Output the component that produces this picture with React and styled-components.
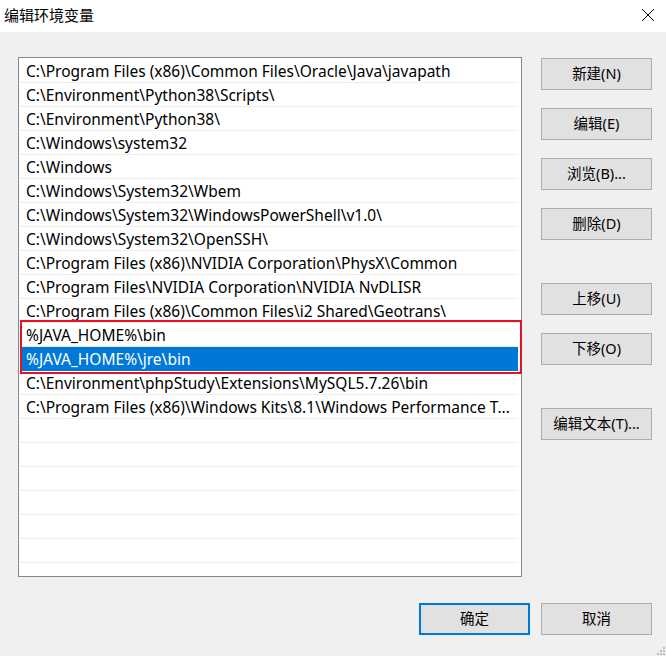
import React from "react";
import styled, { createGlobalStyle } from "styled-components";

const Global = createGlobalStyle`
  html, body {
    margin: 0;
    padding: 0;
    background: #f0f0f0;
  }
  body {
    font-family: "Microsoft YaHei UI", "Noto Sans", "Noto Sans CJK SC", sans-serif;
  }
`;

const Window = styled.div`
  width: 666px;
  height: 656px;
  background: #f0f0f0;
  position: relative;
  overflow: hidden;
`;

const TitleBar = styled.div`
  height: 32px;
  background: #ffffff;
  display: flex;
  align-items: center;
  justify-content: space-between;
  padding: 0 10px 0 4px;
  box-sizing: border-box;
`;

const Title = styled.div`
  font-family: "Noto Sans CJK SC", sans-serif;
  font-size: 15px;
  color: #000;
  margin-top: -4px;
`;

const Close = styled.div`
  width: 16px;
  height: 16px;
  margin-top: -4px;
`;

const Body = styled.div`
  display: flex;
  padding: 25px 14px 0 18px;
`;

const List = styled.div`
  width: 504px;
  height: 520px;
  box-sizing: border-box;
  border: 1px solid #828790;
  background: #fff;
  padding: 1px 0 0 1px;
  position: relative;
`;

const Row = styled.div`
  height: 24px;
  box-sizing: border-box;
  margin-right: 3px;
  border-bottom: 1px solid ${(p) => (p.$selected ? "#0078d7" : "#ededed")};
  background: ${(p) => (p.$selected ? "#0078d7" : "transparent")};
  color: ${(p) => (p.$selected ? "#fff" : "#000")};
  font-family: "Noto Sans", "Noto Sans CJK SC", sans-serif;
  font-size: 15.5px;
  line-height: 24px;
  padding-left: 6px;
  white-space: nowrap;
  overflow: hidden;
`;

const Highlight = styled.div`
  position: absolute;
  left: 1px;
  top: 262px;
  width: 502px;
  height: 54px;
  box-sizing: border-box;
  border: 2px solid #e81123;
  pointer-events: none;
`;

const Side = styled.div`
  display: flex;
  flex-direction: column;
  margin-left: 19px;
  padding-top: 1px;
`;

const Button = styled.div`
  width: 111px;
  height: 32px;
  box-sizing: border-box;
  border: ${(p) => (p.$default ? "2px solid #0078d7" : "1px solid #adadad")};
  background: #e1e1e1;
  display: flex;
  align-items: center;
  justify-content: center;
  padding-bottom: 3px;
  font-family: "Noto Sans", "Noto Sans CJK SC", sans-serif;
  font-size: 14.5px;
  color: #000;
  margin-top: ${(p) => p.$gap || 0}px;
`;

const Footer = styled.div`
  display: flex;
  justify-content: flex-end;
  gap: 11px;
  padding: 26px 14px 0 0;
`;

const Grip = styled.div`
  position: absolute;
  right: 1px;
  bottom: 1px;
  width: 10px;
  height: 10px;
  display: grid;
  grid-template-columns: repeat(3, 2px);
  grid-auto-rows: 2px;
  gap: 1px;
  justify-content: end;
  align-content: end;
`;

const Dot = styled.span`
  background: ${(p) => (p.$on ? "#bcbcbc" : "transparent")};
`;

const paths = [
  "C:\\Program Files (x86)\\Common Files\\Oracle\\Java\\javapath",
  "C:\\Environment\\Python38\\Scripts\\",
  "C:\\Environment\\Python38\\",
  "C:\\Windows\\system32",
  "C:\\Windows",
  "C:\\Windows\\System32\\Wbem",
  "C:\\Windows\\System32\\WindowsPowerShell\\v1.0\\",
  "C:\\Windows\\System32\\OpenSSH\\",
  "C:\\Program Files (x86)\\NVIDIA Corporation\\PhysX\\Common",
  "C:\\Program Files\\NVIDIA Corporation\\NVIDIA NvDLISR",
  "C:\\Program Files (x86)\\Common Files\\i2 Shared\\Geotrans\\",
  "%JAVA_HOME%\\bin",
  "%JAVA_HOME%\\jre\\bin",
  "C:\\Environment\\phpStudy\\Extensions\\MySQL5.7.26\\bin",
  "C:\\Program Files (x86)\\Windows Kits\\8.1\\Windows Performance T...",
  "",
  "",
  "",
  "",
  "",
  "",
];

const sideButtons = [
  { label: "新建(N)", gap: 0 },
  { label: "编辑(E)", gap: 18 },
  { label: "浏览(B)...", gap: 18 },
  { label: "删除(D)", gap: 18 },
  { label: "上移(U)", gap: 43 },
  { label: "下移(O)", gap: 18 },
  { label: "编辑文本(T)...", gap: 43 },
];

export default function App() {
  return (
    <Window>
      <Global />
      <TitleBar>
        <Title>编辑环境变量</Title>
        <Close>
          <svg width="16" height="16" viewBox="0 0 16 16">
            <path d="M2 2 L14 14 M14 2 L2 14" stroke="#000" strokeWidth="1" fill="none" />
          </svg>
        </Close>
      </TitleBar>
      <Body>
        <List>
          {paths.map((p, i) => (
            <Row key={i} $selected={i === 12}>
              {p}
            </Row>
          ))}
          <Highlight />
        </List>
        <Side>
          {sideButtons.map((b) => (
            <Button key={b.label} $gap={b.gap}>
              {b.label}
            </Button>
          ))}
        </Side>
      </Body>
      <Footer>
        <Button $default>确定</Button>
        <Button>取消</Button>
      </Footer>
      <Grip>
        {[0, 0, 1, 0, 1, 1, 1, 1, 1].map((on, i) => (
          <Dot key={i} $on={on} />
        ))}
      </Grip>
    </Window>
  );
}
